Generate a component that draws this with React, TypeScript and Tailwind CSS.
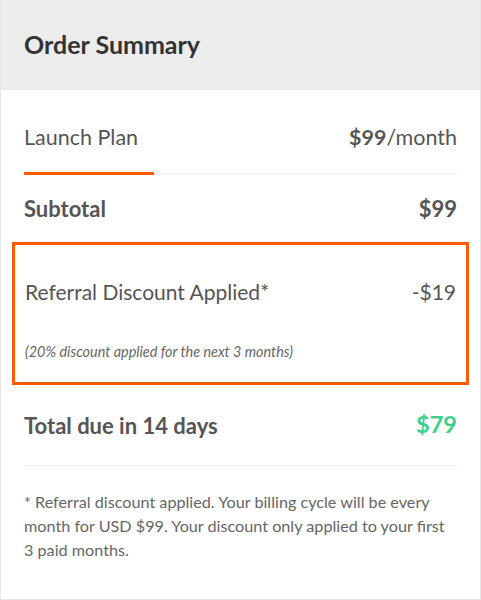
export default function App() {
  return (
    <div
      className="w-[481px] h-[600px] bg-white border-x border-b border-[#e6e6e6] flex flex-col"
      style={{ fontFamily: "Lato, 'Open Sans', sans-serif" }}
    >
      <div className="h-[90px] shrink-0 bg-[#ececec] px-[23px] flex items-center">
        <h2 className="text-[25px] font-bold text-[#333]">Order Summary</h2>
      </div>

      <div className="px-[23px]">
        <div className="flex justify-between items-center h-[82px] pt-[12px] text-[21.5px] text-[#555]">
          <span>Launch Plan</span>
          <span>
            <span className="font-bold">$99</span>/month
          </span>
        </div>
        <div className="flex items-center">
          <div className="w-[130px] h-[3px] bg-[#ff5a00]" />
          <div className="flex-1 h-px bg-[#eeeeee]" />
        </div>
        <div className="flex justify-between items-center h-[67px] text-[22px] font-bold text-[#555]">
          <span>Subtotal</span>
          <span>$99</span>
        </div>
      </div>

      <div className="mx-[11px] h-[143px] border-[3px] border-[#ff5a00] px-[10px] flex flex-col">
        <div className="flex justify-between items-center pt-[31px] text-[21px] text-[#555]">
          <span>Referral Discount Applied*</span>
          <span>-$19</span>
        </div>
        <div className="mt-[33px] text-[14.4px] italic text-[#666]">
          (20% discount applied for the next 3 months)
        </div>
      </div>

      <div className="px-[23px]">
        <div className="flex justify-between items-center h-[80px] text-[22px] font-bold text-[#555]">
          <span>Total due in 14 days</span>
          <span className="text-[23.5px] text-[#3ecf8e]">$79</span>
        </div>
        <div className="h-px bg-[#eeeeee]" />
        <p className="pt-[24px] text-[16.2px] leading-[24px] text-[#666]">
          * Referral discount applied. Your billing cycle will be every
          <br />
          month for USD $99. Your discount only applied to your first
          <br />3 paid months.
        </p>
      </div>
    </div>
  );
}
